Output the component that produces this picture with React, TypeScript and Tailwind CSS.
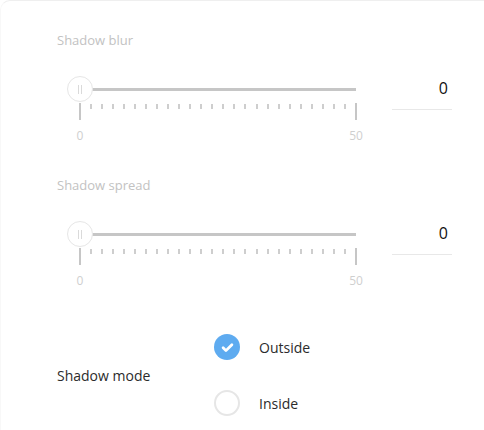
const ticks = Array.from({ length: 26 }, (_, i) => i);

function Slider({ label, value }: { label: string; value: number }) {
  return (
    <div className="flex flex-col">
      <div className="h-4 pl-[56px] text-[13px] leading-4 text-[#c2c2c2]">{label}</div>
      <div className="mt-[28px] flex items-start pl-[66px]">
        <div className="flex w-[302px] flex-col">
          <div className="relative h-[26px]">
            <div className="absolute left-[13px] right-[13px] top-[12px] h-[3px] bg-[#c6c6c6]" />
            <div className="absolute left-0 top-0 flex h-[26px] w-[26px] items-center justify-center gap-[2px] rounded-full border border-[#e6e6e6] bg-white">
              <span className="h-[9px] w-px bg-[#dadada]" />
              <span className="h-[9px] w-px bg-[#dadada]" />
            </div>
          </div>
          <div className="mx-[12px] mt-px flex items-start justify-between">
            {ticks.map((i) =>
              i === 0 || i === ticks.length - 1 ? (
                <span key={i} className="h-[17px] w-[2px] bg-[#c6c6c6]" />
              ) : (
                <span key={i} className="mt-px h-[5px] w-[2px] bg-[#cecece]" />
              )
            )}
          </div>
          <div className="mt-[9px] flex justify-between text-[12px] leading-[14px] text-[#cfcfcf]">
            <span className="w-[26px] text-center">0</span>
            <span className="w-[26px] text-center">50</span>
          </div>
        </div>
        <div className="ml-[23px] h-[34px] w-[60px] border-b border-[#e8e8e8] pr-[4px] pt-[2px] text-right text-[16px] leading-5 text-[#111]">
          {value}
        </div>
      </div>
    </div>
  );
}

function Radio({ label, checked }: { label: string; checked?: boolean }) {
  return (
    <div className="flex h-[26px] items-center">
      {checked ? (
        <span className="flex h-[26px] w-[26px] items-center justify-center rounded-full bg-[#5eabf0]">
          <svg width="15" height="15" viewBox="0 0 24 24" fill="none" stroke="white" strokeWidth="4.5" strokeLinecap="round" strokeLinejoin="round">
            <path d="M5 12.5l4.5 4.5L19 7.5" />
          </svg>
        </span>
      ) : (
        <span className="h-[26px] w-[26px] rounded-full border-2 border-[#e6e6e6] bg-white" />
      )}
      <span className="ml-[19px] text-[14px] text-[#2b2b2b]">{label}</span>
    </div>
  );
}

export default function App() {
  return (
    <div className="h-[430px] w-[484px] overflow-hidden bg-white" style={{ fontFamily: "'Open Sans', Lato, sans-serif" }}>
      <div className="h-[440px] w-[500px] rounded-tl-[10px] border-l border-t border-l-[#f8f8f8] border-t-[#efefef] pt-[31px]">
        <Slider label="Shadow blur" value={0} />
        <div className="mt-[34px]">
          <Slider label="Shadow spread" value={0} />
        </div>
        <div className="mt-[46px] flex items-center">
          <div className="w-[213px] pl-[56px] text-[14px] text-[#2b2b2b]">Shadow mode</div>
          <div className="flex flex-col gap-[30px]">
            <Radio label="Outside" checked />
            <Radio label="Inside" />
          </div>
        </div>
      </div>
    </div>
  );
}
